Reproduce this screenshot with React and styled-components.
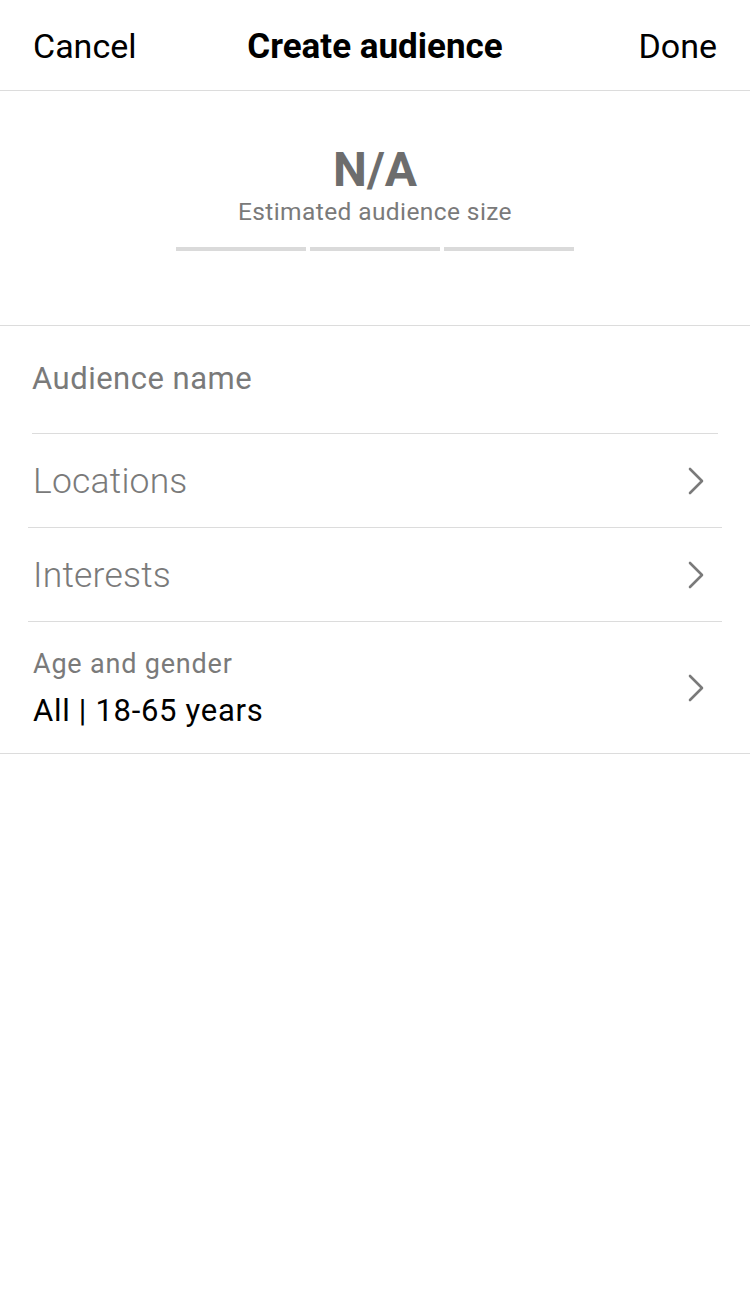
import React from "react";
import styled, { createGlobalStyle } from "styled-components";

const Global = createGlobalStyle`
  html, body { margin: 0; padding: 0; background: #fff; }
  body { font-family: Roboto, "Liberation Sans", sans-serif; -webkit-font-smoothing: antialiased; }
`;

const Page = styled.div`
  width: 750px;
  min-height: 1296px;
  background: #fff;
`;

const Header = styled.header`
  height: 91px;
  border-bottom: 1px solid #dcdcdc;
  display: grid;
  grid-template-columns: 1fr auto 1fr;
  align-items: center;
  padding: 0 33px;
  box-sizing: border-box;
`;

const NavButton = styled.span`
  font-size: 34px;
  color: #000;
  padding-top: 2px;
  justify-self: ${(p) => (p.$right ? "end" : "start")};
`;

const Title = styled.h1`
  margin: 0;
  font-size: 35px;
  font-weight: 700;
  color: #000;
  padding-top: 2px;
`;

const Estimate = styled.section`
  height: 235px;
  border-bottom: 1px solid #dcdcdc;
  display: flex;
  flex-direction: column;
  align-items: center;
  padding-top: 52px;
  box-sizing: border-box;
`;

const Size = styled.div`
  font-size: 48px;
  font-weight: 700;
  color: #6d6d6d;
  line-height: 54px;
`;

const SizeLabel = styled.div`
  font-size: 24.5px;
  color: #7a7a7a;
  line-height: 30px;
  letter-spacing: 0.4px;
`;

const Bars = styled.div`
  display: flex;
  gap: 4px;
  margin-top: 20px;
`;

const Bar = styled.div`
  width: 130px;
  height: 4px;
  background: #dadada;
`;

const FormList = styled.div`
  border-bottom: 1px solid #dcdcdc;
`;

const NameRow = styled.div`
  margin: 0 32px;
  height: 108px;
  border-bottom: 1px solid #dcdcdc;
  display: flex;
  align-items: center;
  font-size: 31px;
  letter-spacing: 0.5px;
  color: #7a7a7a;
  box-sizing: border-box;
  padding-bottom: 2px;
`;

const Row = styled.div`
  margin: 0 28px;
  height: ${(p) => p.$h}px;
  border-bottom: ${(p) => (p.$last ? "none" : "1px solid #dcdcdc")};
  display: flex;
  align-items: center;
  justify-content: space-between;
  padding: 0 16px 0 5px;
  box-sizing: border-box;
`;

const RowLabel = styled.span`
  font-size: 35.5px;
  color: #7a7a7a;
  font-weight: 300;
  letter-spacing: 0.2px;
`;

const Stack = styled.div`
  display: flex;
  flex-direction: column;
  gap: 13px;
  padding-top: 2px;
`;

const SmallLabel = styled.span`
  font-size: 27px;
  line-height: 32px;
  color: #7a7a7a;
  letter-spacing: 0.8px;
`;

const Value = styled.span`
  font-size: 31px;
  line-height: 36px;
  color: #000;
  letter-spacing: 0.7px;
`;

const Chevron = () => (
  <svg width="20" height="30" viewBox="0 0 20 30" fill="none">
    <path d="M4 3 L16 15 L4 27" stroke="#7a7a7a" strokeWidth="2.6" strokeLinecap="round" strokeLinejoin="round" />
  </svg>
);

export default function App() {
  return (
    <Page>
      <Global />
      <Header>
        <NavButton>Cancel</NavButton>
        <Title>Create audience</Title>
        <NavButton $right>Done</NavButton>
      </Header>
      <Estimate>
        <Size>N/A</Size>
        <SizeLabel>Estimated audience size</SizeLabel>
        <Bars>
          <Bar />
          <Bar />
          <Bar />
        </Bars>
      </Estimate>
      <FormList>
        <NameRow>Audience name</NameRow>
        <Row $h={94}>
          <RowLabel>Locations</RowLabel>
          <Chevron />
        </Row>
        <Row $h={94}>
          <RowLabel>Interests</RowLabel>
          <Chevron />
        </Row>
        <Row $h={131} $last>
          <Stack>
            <SmallLabel>Age and gender</SmallLabel>
            <Value>All | 18-65 years</Value>
          </Stack>
          <Chevron />
        </Row>
      </FormList>
    </Page>
  );
}
